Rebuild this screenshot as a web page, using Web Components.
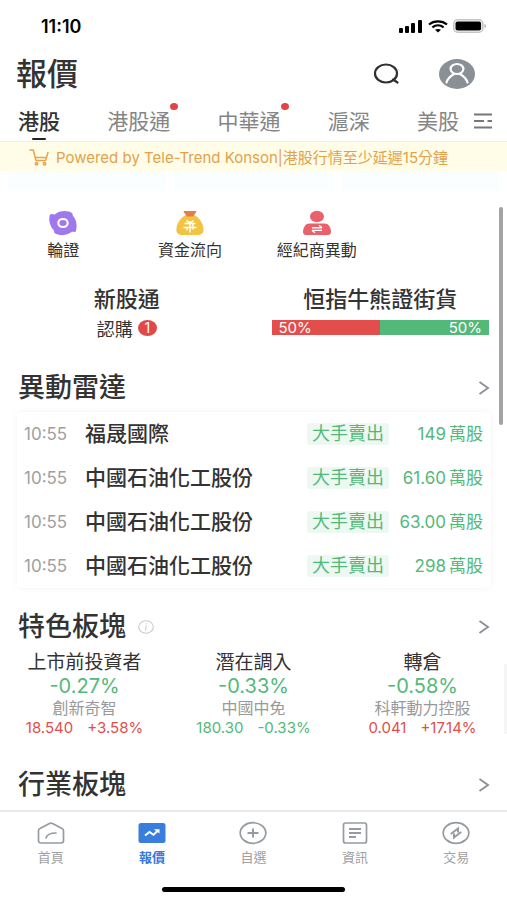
<!DOCTYPE html>
<html lang="zh-Hant">
<head>
<meta charset="utf-8">
<meta name="viewport" content="width=device-width, initial-scale=1">
<title>報價</title>
<style>
  :root {
    --ink: #333;
    --muted: #a0a0a0;
    --line: #e9e9eb;
    --up: #e34d4b;
    --down: #53b97a;
    --blue: #3478e0;
  }
  body {
    margin: 0;
    background: #fff;
    color: var(--ink);
    font-family: Inter, "Noto Sans CJK TC", sans-serif;
  }
</style>
</head>
<body>
<quote-app></quote-app>

<script>
const icons = {
  signal: '<svg width="24" height="13" viewBox="0 0 24 13"><rect y="8" width="4" height="5" rx="1"/><rect x="6" y="6" width="4" height="7" rx="1"/><rect x="12" y="3" width="4" height="10" rx="1"/><rect x="19" width="4" height="13" rx="1"/></svg>',
  wifi: '<svg width="20" height="13" viewBox="0 0 20 13" fill="none" stroke="#000" stroke-width="2.2"><path d="M1 4.5C6 .2 14 .2 19 4.5M4.4 7.4c3.3-2.8 7.9-2.8 11.2 0"/><path d="M7 9.8c1.8-1.2 4.2-1.2 6 0L10 12.6z" fill="#000" stroke="none"/></svg>',
  battery: '<svg width="34" height="14" viewBox="0 0 34 14"><rect x=".8" y=".8" width="29" height="12.4" rx="4" fill="#fff" stroke="#c4c4c4" stroke-width="1.6"/><rect x="2.5" y="2.5" width="25.6" height="9" rx="2"/><path d="M31.5 5v4c2-.8 2-3.2 0-4z" fill="#aaa"/></svg>',
  search: '<svg width="28" height="24" viewBox="0 0 28 24" fill="none" stroke="#303030" stroke-width="2.2" stroke-linecap="round"><ellipse cx="13" cy="11.5" rx="11" ry="9"/><path d="M20 17.5l4.500 3"/></svg>',
  user: '<svg width="36" height="30" viewBox="0 0 36 30"><ellipse cx="18" cy="15" rx="18" ry="15" fill="#8b9096"/><g fill="none" stroke="#fff" stroke-width="2.2" stroke-linecap="round"><ellipse cx="18" cy="10" rx="6.4" ry="5"/><path d="M7.5 23.5c1.200-4 4-6.500 7.500-8.500M28.500 23.5c-1.200-4-4-6.500-7.500-8.500"/></g></svg>',
  menu: '<svg width="20" height="18" viewBox="0 0 20 18" fill="none" stroke="#777" stroke-width="1.8"><path d="M1 2.500h18M1 9h10M14.500 9H19M1 15.500h18"/></svg>',
  cart: '<svg width="20" height="18" viewBox="0 0 20 18" fill="none" stroke="#e8a44a" stroke-width="1.5" stroke-linecap="round" stroke-linejoin="round"><path d="M1 2h3.200l2.800 10.500h9.500L19 4.500M6 9.500h11"/><circle cx="7.500" cy="15.800" r="1.200"/><circle cx="15.500" cy="15.800" r="1.200"/></svg>',
  warrant: '<svg width="30" height="26" viewBox="0 0 30 26"><path d="M3 4c2 0 2.500.8 4 .2C12 .3 20 0 24.500 3.500c.3 1.300-.1 1.600.8 2.700 3.400 4 4 10.200 2.500 15-1.400 1.500-2.300.4-3.800.6-1.500 1.400-2.200.9-3.500 2-4.500 2-10 1.900-14-.7-.7-1.200 0-1.800-.9-3C1.800 16 .4 10 1.800 5z" fill="#a078ed"/><ellipse cx="15" cy="13" rx="4.7" ry="4" fill="none" stroke="#fff" stroke-width="2.1"/></svg>',
  moneybag: '<svg width="30" height="26" viewBox="0 0 30 26"><path d="M11 5h8c5 2.500 9 7.500 9.500 13.500C29 23.500 26 25 22 25H7.500C3 25 .8 22.500 1.500 18.500 2 12.500 6 7.500 11 5z" fill="#f1c443"/><path d="M9.500 1h11c.9 0 1.100.5.600 1.200L18 6.500h-6L8.900 2.200C8.400 1.500 8.600 1 9.500 1z" fill="#e57c50"/><path d="M11.500 10.500l3.500 3 3.500-3M9.500 13.500h11M8.500 17.500h13M15 11v11.500M12 17.500v3M18 13.500v6" fill="none" stroke="#fff" stroke-width="1.4"/></svg>',
  broker: '<svg width="30" height="26" viewBox="0 0 30 26"><ellipse cx="15" cy="6.500" rx="7" ry="5.800" fill="#ea606b"/><path d="M7.500 13.500h15c4 0 6 3.500 6.500 8 .1 2-1 3.500-3 3.500H4c-2 0-3.100-1.500-3-3.500.5-4.500 2.500-8 6.500-8z" fill="#ea606b"/><path d="M20 17.700H10M20 17.700l-3-2.400M10 20.400h10M10 20.400l3 2.300" fill="none" stroke="#fff" stroke-width="1.4"/></svg>',
  chevron: '<svg width="12" height="14" viewBox="0 0 12 14" fill="none" stroke="#8d9197" stroke-width="1.9"><path d="M1.500 1l8.500 6-8.500 6"/></svg>',
  info: '<svg width="16" height="14" viewBox="0 0 16 14" fill="none" stroke="#c5cbce" stroke-width="1.1"><ellipse cx="8" cy="7" rx="7.300" ry="6.200"/><path d="M8.800 3.300l-.2 1M8.300 5.600L7.300 10.500"/></svg>',
  home: '<svg width="28" height="24" viewBox="0 0 28 24" fill="none" stroke="#969ba3" stroke-width="1.7" stroke-linejoin="round" stroke-linecap="round"><path d="M3 7.600L12.500 2.500c1-.5 2-.5 3 0L25 7.600c1 .5 1.500 1.200 1.500 2.200v10c0 1.500-1 2.200-2.500 2.200H4c-1.500 0-2.500-.7-2.500-2.200v-10C1.500 8.800 2 8.100 3 7.600z"/><path d="M9 17c.8-3.200 4-5 10-5"/></svg>',
  quote: '<svg width="28" height="24" viewBox="0 0 28 24"><rect x=".5" y="2" width="27" height="20" rx="2.500" fill="#3b7ddd"/><path d="M7 14.500l4.500-3.500 4 2.800 4.500-4.300" fill="none" stroke="#fff" stroke-width="2"/><path d="M15.800 8.300h5.700v4.200z" fill="#fff"/></svg>',
  plus: '<svg width="28" height="24" viewBox="0 0 28 24" fill="none" stroke="#969ba3" stroke-width="1.7"><ellipse cx="14" cy="12" rx="12.800" ry="10.300"/><path d="M8.500 12h11M14 7.500v9" stroke-width="2"/></svg>',
  news: '<svg width="28" height="24" viewBox="0 0 28 24" fill="none" stroke="#969ba3" stroke-width="1.7"><rect x="2.500" y="2" width="23" height="20" rx="2"/><path d="M8 8h12M8 12h12M8 16h7" stroke-width="1.8"/></svg>',
  trade: '<svg width="28" height="24" viewBox="0 0 28 24" fill="none" stroke="#969ba3" stroke-width="1.7"><ellipse cx="14" cy="12" rx="12.800" ry="10.300"/><path d="M8.800 13l7.200-5.500v4M19.200 11l-7.200 5.500v-4" stroke-width="2"/></svg>'
};

// Shared by every element: opens the shadow root and fills it once.
class BaseElement extends HTMLElement {
  constructor() {
    super();
    this.attachShadow({ mode: 'open' });
  }

  connectedCallback() {
    this.shadowRoot.innerHTML = `
      <style>
        * { box-sizing: border-box; }
        svg { display: block; }
        a { color: inherit; text-decoration: none; }
        button { border: 0; padding: 0; background: none; color: inherit; font: inherit; cursor: pointer; }
      </style>
      ${this.render()}
    `;
  }
}

class StatusBar extends BaseElement {
  render() {
    return `
      <style>
        :host { display: flex; align-items: center; justify-content: space-between; height: 52px; padding: 0 20px 0 41px; color: #000; }
        time { font-size: 18px; font-weight: 600; }
        div { display: flex; align-items: center; gap: 5px; }
      </style>
      <time>11:10</time>
      <div>${icons.signal}${icons.wifi}${icons.battery}</div>
    `;
  }
}

class PageHeader extends BaseElement {
  render() {
    return `
      <style>
        :host { display: flex; align-items: center; height: 44px; padding: 0 32px 0 16px; }
        h1 { flex: 1; margin: 0; font-size: 31px; line-height: 44px; font-weight: 500; }
        div { display: flex; align-items: center; gap: 38px; }
      </style>
      <h1><slot></slot></h1>
      <div>
        <button aria-label="搜尋">${icons.search}</button>
        <button aria-label="帳戶">${icons.user}</button>
      </div>
    `;
  }
}

class MarketTabs extends BaseElement {
  render() {
    const tabs = [['港股', 'active'], ['港股通', 'dot'], ['中華通', 'dot'], ['滬深', ''], ['美股', '']];
    return `
      <style>
        :host { display: flex; justify-content: space-between; height: 46px; padding: 0 14px 0 18px; border-bottom: 1px solid #eee; }
        nav { display: flex; flex: 1; justify-content: space-between; margin-right: 14px; }
        a { position: relative; padding-top: 6px; font-size: 21px; line-height: 40px; color: #858585; white-space: nowrap; }
        button { padding-top: 5px; }
        .active { color: var(--ink); font-weight: 500; }
        .active::after { content: ""; position: absolute; left: 50%; bottom: 1px; width: 14px; height: 2px; margin-left: -7px; border-radius: 1px; background: #222; }
        .dot::after { content: ""; position: absolute; right: -8px; top: 7px; width: 8px; height: 7px; border-radius: 50%; background: #df4544; }
      </style>
      <nav>${tabs.map(([label, cls]) => `<a href="#" class="${cls}">${label}</a>`).join('')}</nav>
      <button aria-label="更多市場">${icons.menu}</button>
    `;
  }
}

class NoticeBar extends BaseElement {
  render() {
    return `
      <style>
        :host { display: flex; align-items: center; gap: 7px; height: 29px; padding-left: 29px; background: #fffde8; color: #e3a14c; font-size: 15px; white-space: nowrap; }
      </style>
      ${icons.cart}
      <div>Powered by Tele-Trend Konson|港股行情至少延遲15分鐘</div>
    `;
  }
}

class ShortcutItem extends BaseElement {
  render() {
    return `
      <style>
        :host { display: block; }
        a { display: flex; flex-direction: column; align-items: center; gap: 4px; font-size: 16px; line-height: 20px; white-space: nowrap; }
      </style>
      <a href="#">${icons[this.getAttribute('icon')]}<slot></slot></a>
    `;
  }
}

class SummaryCards extends BaseElement {
  render() {
    return `
      <style>
        :host { display: grid; grid-template-columns: 1fr 1fr; padding-top: 24px; text-align: center; }
        section { padding: 0 18px; }
        h3 { margin: 0; font-size: 22px; line-height: 30px; font-weight: 500; white-space: nowrap; }
        .sub { display: flex; align-items: center; justify-content: center; gap: 5px; height: 28px; font-size: 18px; }
        .count { width: 19px; height: 16px; border-radius: 50%; background: #df4a48; color: #fff; font-size: 14px; line-height: 16px; }
        .bar { display: flex; margin-top: 6px; color: #fff; font-size: 15px; line-height: 15px; }
        .bar span { flex: 1; padding: 0 7px; background: var(--up); text-align: left; }
        .bar span + span { background: var(--down); text-align: right; }
      </style>
      <section>
        <h3>新股通</h3>
        <div class="sub">認購<span class="count">1</span></div>
      </section>
      <section>
        <h3>恒指牛熊證街貨</h3>
        <div class="bar"><span>50%</span><span>50%</span></div>
      </section>
    `;
  }
}

class SectionTitle extends BaseElement {
  render() {
    return `
      <style>
        :host { display: flex; align-items: center; justify-content: space-between; height: 48px; padding: 0 17px 0 18px; }
        h2 { display: flex; align-items: center; gap: 12px; margin: 0; font-size: 27px; line-height: 46px; font-weight: 500; white-space: nowrap; }
      </style>
      <h2><slot></slot>${this.hasAttribute('info') ? icons.info : ''}</h2>
      <a href="#" aria-label="更多">${icons.chevron}</a>
    `;
  }
}

class RadarTable extends BaseElement {
  render() {
    const rows = [
      ['10:55', '福晟國際', '大手賣出', '149'],
      ['10:55', '中國石油化工股份', '大手賣出', '61.60'],
      ['10:55', '中國石油化工股份', '大手賣出', '63.00'],
      ['10:55', '中國石油化工股份', '大手賣出', '298']
    ];
    return `
      <style>
        :host { display: block; margin: 0 16px 0 17px; padding: 0 8px 0 7px; border-radius: 4px; box-shadow: 0 0 6px rgba(0, 0, 0, .05); }
        table { width: 100%; border-collapse: collapse; white-space: nowrap; }
        td { height: 44px; padding: 0; line-height: 24px; }
        .time { width: 61px; color: var(--muted); font-size: 17px; }
        .name { font-size: 21px; font-weight: 500; }
        .tag { text-align: right; }
        .tag span { display: inline-block; padding: 0 5px; border-radius: 3px; background: #edf8f2; color: var(--down); font-size: 18px; line-height: 22px; }
        .amount { width: 94px; color: var(--down); font-size: 17px; text-align: right; }
        .unit { margin-left: 3px; }
      </style>
      <table>
        ${rows.map(([time, name, tag, amount]) => `
          <tr>
            <td class="time">${time}</td>
            <td class="name">${name}</td>
            <td class="tag"><span>${tag}</span></td>
            <td class="amount">${amount}<span class="unit">萬股</span></td>
          </tr>`).join('')}
      </table>
    `;
  }
}

class SectorCard extends BaseElement {
  render() {
    const trend = this.getAttribute('trend');
    return `
      <style>
        :host { display: flex; flex-direction: column; align-items: center; white-space: nowrap; }
        .name { font-size: 19px; line-height: 24px; }
        .change { color: var(--down); font-size: 20px; line-height: 22px; }
        .stock { color: #999; font-size: 16px; line-height: 22px; }
        .quote { display: flex; gap: 14px; font-size: 15px; line-height: 18px; }
        .up { color: var(--up); }
        .down { color: var(--down); }
      </style>
      <div class="name"><slot></slot></div>
      <div class="change">${this.getAttribute('change')}</div>
      <div class="stock">${this.getAttribute('stock')}</div>
      <div class="quote ${trend}"><span>${this.getAttribute('price')}</span><span>${this.getAttribute('move')}</span></div>
    `;
  }
}

class BottomNav extends BaseElement {
  render() {
    const items = [['home', '首頁'], ['quote', '報價'], ['plus', '自選'], ['news', '資訊'], ['trade', '交易']];
    return `
      <style>
        :host { display: block; height: 90px; border-top: 2px solid var(--line); background: #fff; }
        nav { display: grid; grid-template-columns: repeat(5, 1fr); padding-top: 9px; }
        a { display: flex; flex-direction: column; align-items: center; gap: 4px; color: var(--muted); font-size: 13px; line-height: 16px; }
        .active { color: var(--blue); font-weight: 700; }
        .indicator { width: 36%; height: 5px; margin: 22px auto 0; border-radius: 3px; background: #000; }
      </style>
      <nav>${items.map(([icon, label]) => `<a href="#" class="${icon === 'quote' ? 'active' : ''}">${icons[icon]}${label}</a>`).join('')}</nav>
      <div class="indicator"></div>
    `;
  }
}

class QuoteApp extends BaseElement {
  render() {
    return `
      <style>
        :host { display: flex; flex-direction: column; height: 100vh; overflow: hidden; }
        main { position: relative; flex: 1; min-height: 0; overflow: hidden; }
        .peek { display: grid; grid-template-columns: repeat(3, 1fr); gap: 8px; height: 20px; padding: 0 8px; }
        .peek i { background: #fbfefe; }
        .shortcuts { display: grid; grid-template-columns: repeat(4, 1fr); padding-top: 19px; }
        .radar { padding: 22px 0 15px; }
        .sectors { display: grid; grid-template-columns: repeat(3, 1fr); padding-bottom: 24px; }
        .thumb { position: absolute; top: 36px; right: 4px; width: 4px; height: 218px; border-radius: 2px; background: #a3a3a3; }
        .edge { position: absolute; top: 493px; right: 0; width: 3px; height: 70px; background: #f5f5f5; }
      </style>
      <status-bar></status-bar>
      <page-header>報價</page-header>
      <market-tabs></market-tabs>
      <notice-bar></notice-bar>
      <main>
        <div class="peek"><i></i><i></i><i></i></div>
        <div class="shortcuts">
          <shortcut-item icon="warrant">輪證</shortcut-item>
          <shortcut-item icon="moneybag">資金流向</shortcut-item>
          <shortcut-item icon="broker">經紀商異動</shortcut-item>
        </div>
        <summary-cards></summary-cards>
        <div class="radar">
          <section-title>異動雷達</section-title>
          <radar-table></radar-table>
        </div>
        <section-title info>特色板塊</section-title>
        <div class="sectors">
          <sector-card change="-0.27%" stock="創新奇智" price="18.540" move="+3.58%" trend="up">上市前投資者</sector-card>
          <sector-card change="-0.33%" stock="中國中免" price="180.30" move="-0.33%" trend="down">潛在調入</sector-card>
          <sector-card change="-0.58%" stock="科軒動力控股" price="0.041" move="+17.14%" trend="up">轉倉</sector-card>
        </div>
        <section-title>行業板塊</section-title>
        <div class="thumb"></div>
        <div class="edge"></div>
      </main>
      <bottom-nav></bottom-nav>
    `;
  }
}

customElements.define('status-bar', StatusBar);
customElements.define('page-header', PageHeader);
customElements.define('market-tabs', MarketTabs);
customElements.define('notice-bar', NoticeBar);
customElements.define('shortcut-item', ShortcutItem);
customElements.define('summary-cards', SummaryCards);
customElements.define('section-title', SectionTitle);
customElements.define('radar-table', RadarTable);
customElements.define('sector-card', SectorCard);
customElements.define('bottom-nav', BottomNav);
customElements.define('quote-app', QuoteApp);
</script>
</body>
</html>
